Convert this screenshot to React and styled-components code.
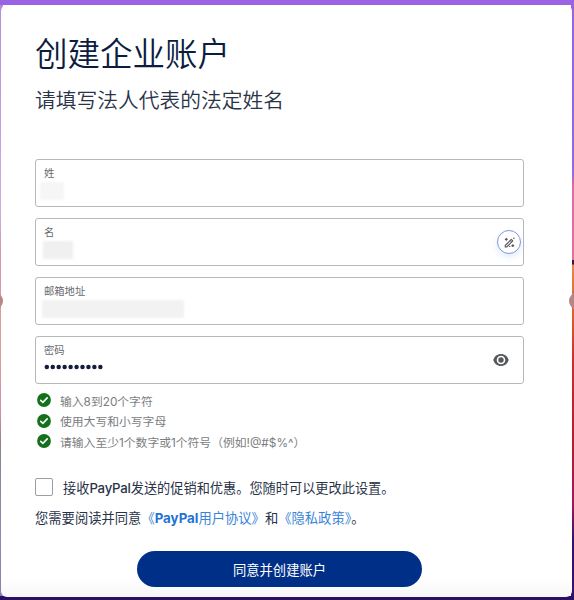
import React, { useState } from 'react';
import styled, { createGlobalStyle } from 'styled-components';

const rules = [
  '输入8到20个字符',
  '使用大写和小写字母',
  '请输入至少1个数字或1个符号（例如!@#$%^）',
];

const App = () => {
  const [agreed, setAgreed] = useState(false);

  return (
    <>
      <GlobalStyle />
      <Page>
        <Notch $side="left" $offset="-15px" />
        <Notch $side="right" $offset="-13px" />
        <Card>
          <Title>创建企业账户</Title>
          <Subtitle>请填写法人代表的法定姓名</Subtitle>
          <Fields>
            <Field>
              <Label>姓</Label>
              <Redacted $width="24px" $left="-4px" $color="#f6f6f6" />
            </Field>
            <Field>
              <Label>名</Label>
              <Redacted $width="30px" $left="-1px" $color="#f0f0f0" />
              <WandButton type="button">
                <WandIcon />
              </WandButton>
            </Field>
            <Field>
              <Label>邮箱地址</Label>
              <Redacted $width="142px" $left="-2px" $color="#f2f2f2" />
            </Field>
            <Field>
              <Label>密码</Label>
              <Dots viewBox="0 0 60 6">
                {Array.from({ length: 10 }, (_, i) => (
                  <circle key={i} cx={2.8 + i * 5.95} cy="3" r="2.25" />
                ))}
              </Dots>
              <EyeButton type="button">
                <EyeIcon />
              </EyeButton>
            </Field>
          </Fields>
          <Rules>
            {rules.map((rule) => (
              <Rule key={rule}>
                <CheckIcon />
                <RuleText>{rule}</RuleText>
              </Rule>
            ))}
          </Rules>
          <Consent>
            <Checkbox
              type="checkbox"
              checked={agreed}
              onChange={(e) => setAgreed(e.target.checked)}
            />
            <span>接收<Brand>PayPal</Brand>发送的促销和优惠。您随时可以更改此设置。</span>
          </Consent>
          <Terms>
            您需要阅读并同意<TermsLink>《<b>PayPal</b>用户协议》</TermsLink>和<TermsLink>《隐私政策》</TermsLink>。
          </Terms>
          <Submit type="button">同意并创建账户</Submit>
        </Card>
      </Page>
    </>
  );
};

const WandIcon = () => (
  <svg width="11" height="11" viewBox="0 0 11 11" fill="none" stroke="#55585c">
    <path d="M1.2 8.500 7.300 2.400l1.500 1.500-6.100 6.100H1.200z" strokeWidth="1.1" strokeLinejoin="round" />
    <path d="M6.100 3.600 7.600 5.100" strokeWidth="0.9" />
    <path d="M2.300 0.900v2.800M0.900 2.300h2.800M8.800 7.300v2.800M7.400 8.700h2.800" strokeWidth="1.2" />
    <circle cx="9.900" cy="1.300" r="0.8" fill="#55585c" stroke="none" />
    <circle cx="5.800" cy="9.400" r="0.7" fill="#55585c" stroke="none" />
  </svg>
);

const EyeIcon = () => (
  <svg width="16" height="12" viewBox="0 0 16 12">
    <path
      fill="#565a5c"
      fillRule="evenodd"
      d="M8 0C4.2 0 1.4 2.3.3 6c1.1 3.7 3.9 6 7.7 6s6.6-2.3 7.7-6C14.6 2.3 11.8 0 8 0zm0 10.3a4.3 4.3 0 1 1 0-8.6 4.3 4.3 0 0 1 0 8.6z"
    />
    <circle cx="8" cy="6" r="2.7" fill="#565a5c" />
  </svg>
);

const CheckIcon = () => (
  <svg width="14" height="14" viewBox="0 0 14 14">
    <circle cx="7" cy="7" r="6.9" fill="#13701b" />
    <path d="m3.7 7.3 2.2 2.1 4.3-4.5" fill="none" stroke="#fff" strokeWidth="1.6" strokeLinecap="round" />
  </svg>
);

const GlobalStyle = createGlobalStyle`
  * {
    box-sizing: border-box;
  }
  body {
    margin: 0;
    font-family: Inter, "Noto Sans CJK SC", sans-serif;
    color: #2a3348;
  }
`;

const Page = styled.div`
  position: relative;
  height: 600px;
  overflow: hidden;
  padding: 5px 2px 3px 1px;
  background:
    linear-gradient(#9b62e3, #9b62e3) top / 100% 5px no-repeat,
    linear-gradient(#2a1064, #2a1064) bottom / 100% 4px no-repeat,
    linear-gradient(#9b62e3, #8a68dc 18%, #9a68d8 29%, #da6ca8 31%, #e0709c 43.3%, #3c1436 43.4%, #3c1436 44%, #e08a48 44.2%, #d9642f 52%, #c92f2b 60%, #b3202c 73%, #a01860 84%, #34126c 90%) right / 3px 100% no-repeat,
    linear-gradient(#b48be0, #cdaee0 35%, #d896a6 43%, #dba09b 58%, #d08fa8 69%, #8f8390 74%, #9784b8 90%, #8c7db0) left / 3px 100% no-repeat;
`;

const Card = styled.main`
  display: flex;
  flex-direction: column;
  height: 592px;
  padding: 30px 48px 0 34px;
  border-radius: 6px;
  background: linear-gradient(#fff 97%, #f6f6f8);
`;

const Notch = styled.i`
  position: absolute;
  top: 292px;
  ${({ $side }) => $side}: ${({ $offset }) => $offset};
  width: 18px;
  height: 18px;
  border-radius: 50%;
  background: #bb8585;
`;

const Title = styled.h1`
  margin: 0;
  font-size: 32.5px;
  font-weight: 350;
  line-height: 40px;
  color: #0b1c3e;
`;

const Subtitle = styled.h2`
  margin: 12px 0 0;
  font-size: 20.75px;
  font-weight: 350;
  line-height: 28px;
`;

const Fields = styled.div`
  display: grid;
  gap: 11px;
  margin-top: 44px;
`;

const Field = styled.div`
  position: relative;
  height: 48px;
  padding: 6px 8px;
  border: 1px solid #b6b8ba;
  border-radius: 3px;
`;

const Label = styled.div`
  font-size: 10.3px;
  line-height: 15px;
  color: #66696d;
`;

const Redacted = styled.div`
  width: ${({ $width }) => $width};
  height: 18px;
  margin: 1px 0 0 ${({ $left }) => $left};
  background: ${({ $color }) => $color};
  filter: blur(1px);
`;

const Dots = styled.svg`
  display: block;
  width: 60px;
  height: 6px;
  margin-top: 6px;
  fill: #141c38;
`;

const WandButton = styled.button`
  position: absolute;
  top: 11px;
  right: 2px;
  display: flex;
  align-items: center;
  justify-content: center;
  width: 24px;
  height: 24px;
  padding: 0;
  border: 1px solid #8495de;
  border-radius: 50%;
  background: #fff;
  box-shadow: 0 3px 7px rgba(110, 160, 240, 0.2);
`;

const EyeButton = styled.button`
  position: absolute;
  top: 17px;
  right: 14px;
  display: flex;
  padding: 0;
  border: 0;
  background: none;
`;

const Rules = styled.ul`
  display: grid;
  gap: 6.5px;
  margin: 9px 0 0;
  padding: 0;
  list-style: none;
`;

const Rule = styled.li`
  display: flex;
  align-items: center;
  gap: 9px;
  height: 14px;
  padding-left: 2px;
  font-size: 11.8px;
  line-height: 14px;
  color: #7a7d80;
`;

const RuleText = styled.span`
  padding-top: 3px;
`;

const Consent = styled.label`
  display: flex;
  align-items: center;
  gap: 10px;
  height: 18px;
  margin-top: 30px;
  font-size: 13.2px;
`;

const Checkbox = styled.input`
  appearance: none;
  flex: none;
  width: 18px;
  height: 18px;
  margin: 0;
  border: 1px solid #9c9ea1;
  border-radius: 2px;
  background: #fff;
`;

const Brand = styled.span`
  font-weight: 500;
  letter-spacing: -0.2px;
`;

const Terms = styled.p`
  margin: 12px 0 0;
  font-size: 13.3px;
  line-height: 20px;
`;

const TermsLink = styled.a`
  color: #3a84d8;
  cursor: pointer;

  b {
    color: #1f72d6;
  }
`;

const Submit = styled.button`
  align-self: center;
  width: 285px;
  height: 36px;
  margin-top: 23px;
  border: 0;
  border-radius: 18px;
  background: #002f87;
  color: #fff;
  font-family: inherit;
  font-size: 13.3px;
`;

export default App;
